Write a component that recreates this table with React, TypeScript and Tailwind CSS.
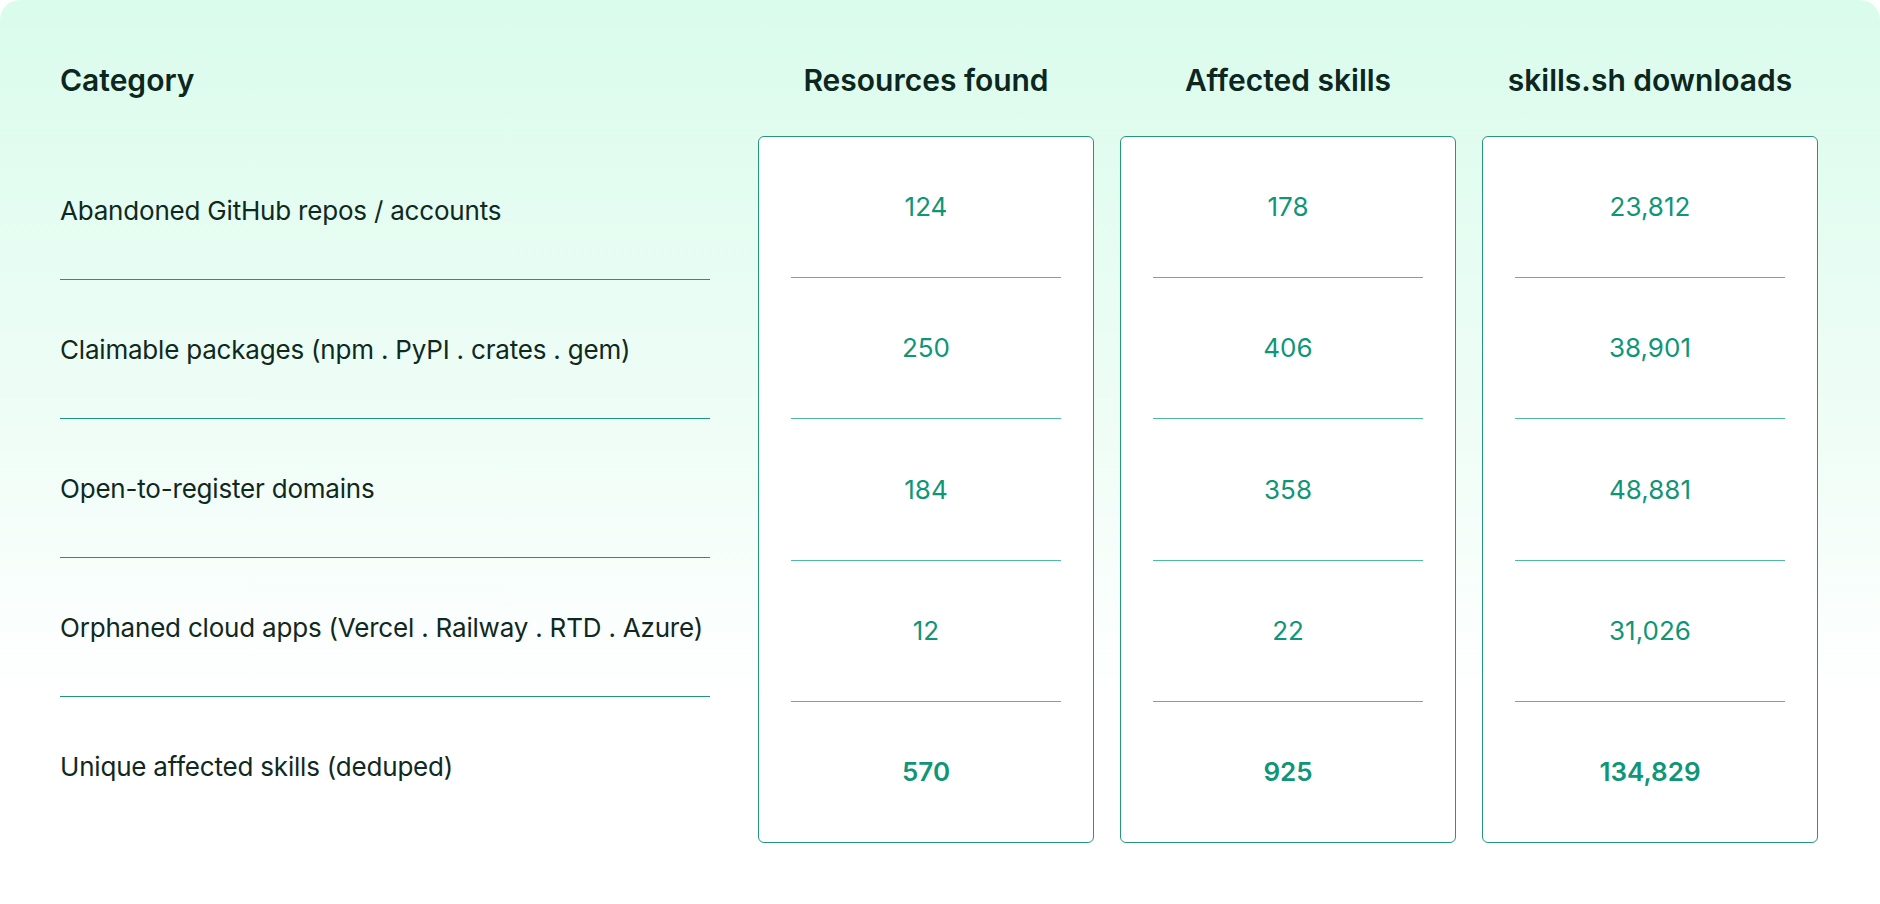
import React from 'react';

const categories = [
  'Abandoned GitHub repos / accounts',
  'Claimable packages (npm . PyPI . crates . gem)',
  'Open-to-register domains',
  'Orphaned cloud apps (Vercel . Railway . RTD . Azure)',
  'Unique affected skills (deduped)',
];

const columns = [
  { title: 'Resources found', values: ['124', '250', '184', '12', '570'] },
  { title: 'Affected skills', values: ['178', '406', '358', '22', '925'] },
  { title: 'skills.sh downloads', values: ['23,812', '38,901', '48,881', '31,026', '134,829'] },
];

function ValueBox({ values }: { values: string[] }) {
  return (
    <div className="h-[707px] rounded-[6px] border border-[#22977c] bg-white flex flex-col">
      {values.map((v, i) => (
        <React.Fragment key={i}>
          {i > 0 && (
            <div className="px-[32px]">
              <div className="h-px bg-[#4cbba2]" />
            </div>
          )}
          <div
            className={`flex-1 flex items-center justify-center text-[26px] leading-none text-[#0f9577] ${
              i === values.length - 1 ? 'font-semibold' : 'font-normal'
            }`}
          >
            {v}
          </div>
        </React.Fragment>
      ))}
    </div>
  );
}

export default function App() {
  return (
    <div className="w-[1880px] h-[904px] bg-white" style={{ fontFamily: 'Inter, "Noto Sans", sans-serif' }}>
      <div className="w-full h-full rounded-[20px] bg-linear-to-b from-[#dafcec] via-[#eefdf6] via-45% to-white to-[78%] pl-[60px] flex">
        {/* category column */}
        <div className="w-[650px] flex flex-col">
          <div className="h-[136px] pt-[62px]">
            <span className="text-[30px] leading-[36px] font-semibold text-[#0d2620]">Category</span>
          </div>
          <div className="pt-[5px]">
            {categories.map((c, i) => (
              <div
                key={c}
                className={`h-[139px] flex items-center whitespace-nowrap text-[26px] tracking-[-0.2px] text-[#10291f] ${
                  i < categories.length - 1 ? 'border-b border-[#1f957a]' : ''
                }`}
              >
                {c}
              </div>
            ))}
          </div>
        </div>

        {/* value columns */}
        <div className="ml-[48px] flex gap-[26px]">
          {columns.map((col) => (
            <div key={col.title} className="w-[336px] flex flex-col">
              <div className="h-[136px] pt-[62px] text-center">
                <span className="text-[30px] leading-[36px] font-semibold text-[#0d2620]">{col.title}</span>
              </div>
              <ValueBox values={col.values} />
            </div>
          ))}
        </div>
      </div>
    </div>
  );
}
